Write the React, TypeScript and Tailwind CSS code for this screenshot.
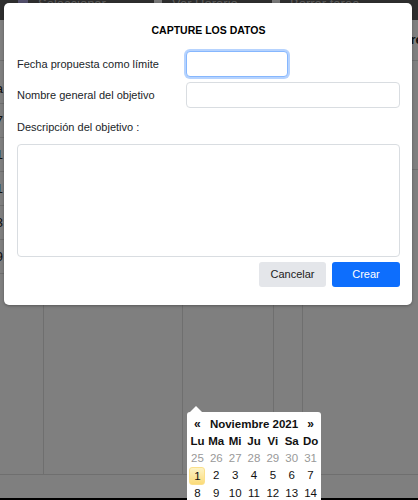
import React from "react";

const font = { fontFamily: '"Liberation Sans", Arial, sans-serif' };

const prevDays = [25, 26, 27, 28, 29, 30, 31];
const week1 = [1, 2, 3, 4, 5, 6, 7];
const week2 = [8, 9, 10, 11, 12, 13, 14];
const dayNames = ["Lu", "Ma", "Mi", "Ju", "Vi", "Sa", "Do"];

function Page() {
  return (
    <div className="flex h-[500px] flex-col bg-white text-[13px] text-[#222]">
      <div className="flex h-[20px] items-start gap-[10px] bg-[#5c5c5c] px-[18px] text-[13px] leading-[8px] text-[#bbb]">
        <span className="h-[10px] w-[10px] bg-[#a59fd6]" />
        <span className="w-[100px]">Seleccionar tarea</span>
        <span className="ml-[6px] h-[8px] w-[8px] bg-[#eee]" />
        <span className="w-[90px]">Ver Horario</span>
        <span className="h-[8px] w-[8px] bg-[#eee]" />
        <span>Borrar tarea</span>
      </div>
      <div className="flex h-[41px] items-center overflow-hidden border-b border-[#dedede] pl-[401px] font-bold whitespace-nowrap">
        Área
      </div>
      <div className="flex h-[414px] border-b border-[#dedede]">
        <div className="flex w-[44px] flex-col border-r border-[#dedede]">
          <div className="flex h-[43px] items-end justify-end border-b border-[#dedede] pr-[40px] pb-[5px]">
            a
          </div>
          {["7", "1", "1", "3", "9"].map((n, i) => (
            <div
              key={i}
              className="flex h-[34px] items-center justify-end border-b border-[#dedede] pr-[40px]"
            >
              {n}
            </div>
          ))}
        </div>
        <div className="w-[139px] border-r border-[#dedede]" />
        <div className="w-[91px] border-r border-[#dedede]" />
        <div className="w-[29px] border-r border-[#dedede]" />
        <div className="flex flex-1 flex-col">
          <div className="h-[109px] border-b border-[#dedede]" />
        </div>
      </div>
      <div className="h-[23px]" />
      <div className="h-[2px] bg-black" />
    </div>
  );
}

function Modal() {
  return (
    <div className="absolute top-[3px] left-[4px] w-[408px] rounded-[5px] bg-white pt-[21px] pr-[12px] pb-[18px] pl-[13px] text-[#212529] shadow-[0_1px_3px_rgba(0,0,0,0.3)]">
      <div className="text-center text-[10.5px] leading-[13px] font-bold text-black">
        CAPTURE LOS DATOS
      </div>
      <div className="mt-[14px] flex items-center">
        <label className="w-[169px] text-[11px]">Fecha propuesta como límite</label>
        <input
          className="h-[26px] w-[102px] rounded-[4px] border border-[#86b7fe] bg-white shadow-[0_0_0_2px_rgba(13,110,253,0.3)] outline-none"
          readOnly
        />
      </div>
      <div className="mt-[5px] flex items-center">
        <label className="w-[169px] text-[11px]">Nombre general del objetivo</label>
        <input className="h-[26px] flex-1 rounded-[4px] border border-[#d9dde1] bg-white outline-none" />
      </div>
      <div className="mt-[12px] text-[11px] leading-[14px]">Descripción del objetivo :</div>
      <textarea className="mt-[10px] block h-[113px] w-full resize-none rounded-[4px] border border-[#d9dde1] outline-none" />
      <div className="mt-[5px] flex justify-end gap-[6px]">
        <button className="h-[25px] w-[67px] rounded-[3px] bg-[#e4e6ea] text-[11px] text-[#222]">
          Cancelar
        </button>
        <button className="h-[25px] w-[68px] rounded-[3px] bg-[#0d6efd] text-[11px] text-white">
          Crear
        </button>
      </div>
    </div>
  );
}

function Calendar() {
  return (
    <div className="absolute top-[412px] left-[187px] w-[134px] rounded-[3px] bg-white px-[1px] pt-[3.5px] text-[11.5px] leading-[17.25px] text-[#111]">
      <div className="absolute -top-[6px] left-[3px] h-0 w-0 border-x-[6px] border-b-[6px] border-x-transparent border-b-white" />
      <div className="grid grid-cols-7 text-center font-bold">
        <span className="text-[12px]">«</span>
        <span className="col-span-5 text-[11.5px] whitespace-nowrap">Noviembre 2021</span>
        <span className="text-[12px]">»</span>
      </div>
      <div className="grid grid-cols-7 text-center font-bold">
        {dayNames.map((d) => (
          <span key={d}>{d}</span>
        ))}
      </div>
      <div className="grid grid-cols-7 text-center text-[#999]">
        {prevDays.map((d) => (
          <span key={d}>{d}</span>
        ))}
      </div>
      <div className="grid grid-cols-7 text-center">
        {week1.map((d) =>
          d === 1 ? (
            <span key={d} className="flex justify-center">
              <span className="w-[16px] rounded-[3px] border border-[#fbe08c] bg-gradient-to-b from-[#fdf3c5] to-[#fbdb78] leading-[16px]">
                1
              </span>
            </span>
          ) : (
            <span key={d}>{d}</span>
          )
        )}
      </div>
      <div className="grid grid-cols-7 text-center">
        {week2.map((d) => (
          <span key={d}>{d}</span>
        ))}
      </div>
    </div>
  );
}

export default function App() {
  return (
    <div className="relative h-[500px] w-[418px] overflow-hidden" style={font}>
      <Page />
      <div className="absolute inset-0 bg-black/50" />
      <Modal />
      <Calendar />
    </div>
  );
}
